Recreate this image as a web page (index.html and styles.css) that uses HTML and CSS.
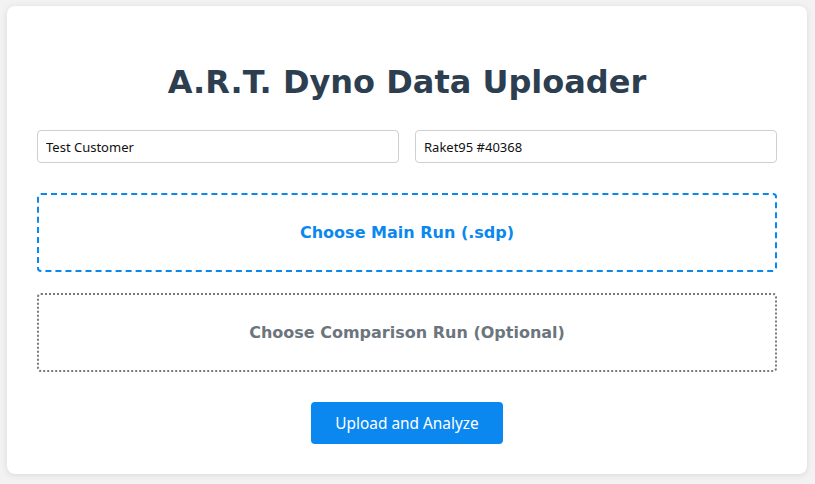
FILE: index.html
```html
<!DOCTYPE html>
<html>
<head>
<meta charset="utf-8">
<link rel="stylesheet" href="styles.css">
</head>
<body>
<div class="card">
  <h1 class="title">A.R.T. Dyno Data Uploader</h1>
  <div class="fields">
    <input class="field" type="text" value="Test Customer">
    <input class="field" type="text" value="Raket95 #40368">
  </div>
  <label class="drop drop-main">Choose Main Run (.sdp)</label>
  <label class="drop drop-compare">Choose Comparison Run (Optional)</label>
  <div class="actions">
    <button class="btn">Upload and Analyze</button>
  </div>
</div>
</body>
</html>
```
FILE: styles.css
```css
html, body {
  margin: 0;
  background: #f2f2f2;
}
body {
  padding-top: 6px;
  height: 484px;
  box-sizing: border-box;
  overflow: hidden;
}
.card {
  width: 800px;
  margin: 0 0 0 7px;
  background: #fff;
  border-radius: 8px;
  box-shadow: 0 1px 6px rgba(0,0,0,0.1);
  padding: 54px 30px 30px;
  box-sizing: border-box;
  height: 468px;
}
.title {
  margin: 0;
  text-align: center;
  font-family: "DejaVu Sans", sans-serif;
  font-weight: bold;
  font-size: 32px;
  line-height: 44px;
  color: #2c3e50;
}
.fields {
  display: grid;
  grid-template-columns: 1fr 1fr;
  gap: 16px;
  margin-top: 26px;
}
.field {
  height: 33px;
  box-sizing: border-box;
  border: 1px solid #cfcfcf;
  border-radius: 4px;
  padding: 0 8px;
  font-family: "Noto Sans", sans-serif;
  font-size: 13px;
  color: #111;
  margin: 0;
  width: 100%;
}
.drop {
  display: flex;
  align-items: center;
  justify-content: center;
  box-sizing: border-box;
  height: 79px;
  border-radius: 4px;
  font-family: "DejaVu Sans", sans-serif;
  font-weight: bold;
  font-size: 16px;
}
.drop-main {
  margin-top: 30px;
  border: 2px dashed #0a88ee;
  color: #0a88ee;
}
.drop-compare {
  margin-top: 21px;
  border: 2px dotted #7a7a7a;
  color: #6c757d;
}
.actions {
  display: flex;
  justify-content: center;
  margin-top: 30px;
}
.btn {
  width: 192px;
  height: 42px;
  border: none;
  border-radius: 4px;
  background: #0a88f0;
  color: #fff;
  font-family: "Noto Sans", sans-serif;
  font-size: 15.4px;
  cursor: pointer;
  margin: 0;
}
```
